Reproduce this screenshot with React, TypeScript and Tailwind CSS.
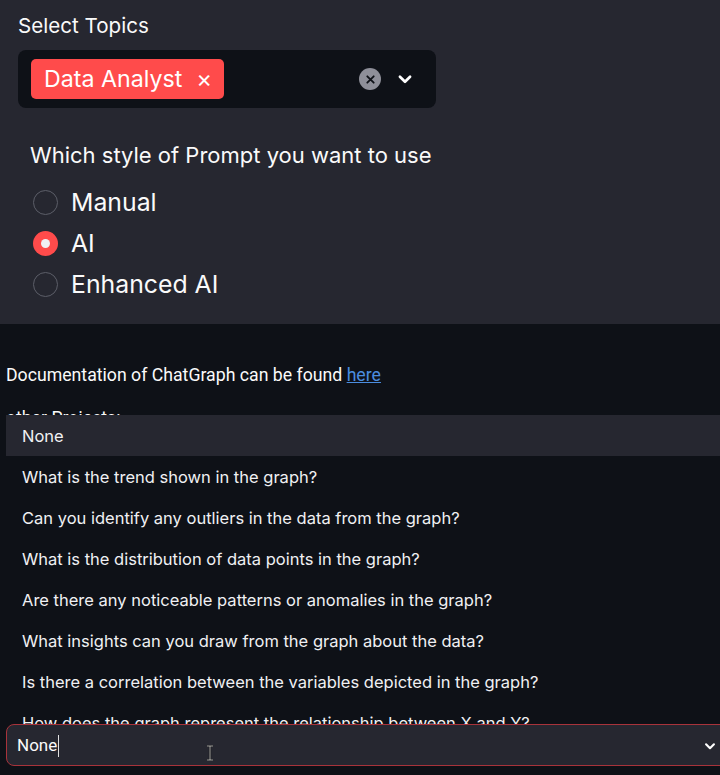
import React from "react";

const items = [
  "None",
  "What is the trend shown in the graph?",
  "Can you identify any outliers in the data from the graph?",
  "What is the distribution of data points in the graph?",
  "Are there any noticeable patterns or anomalies in the graph?",
  "What insights can you draw from the graph about the data?",
  "Is there a correlation between the variables depicted in the graph?",
  "How does the graph represent the relationship between X and Y?",
];

function Chevron({ className = "" }: { className?: string }) {
  return (
    <svg viewBox="0 0 16 16" className={className} fill="none">
      <path d="M3.5 6 L8 10.5 L12.5 6" stroke="currentColor" strokeWidth="2.4" strokeLinecap="round" strokeLinejoin="round" />
    </svg>
  );
}

function Radio({ checked, label }: { checked?: boolean; label: string }) {
  return (
    <div className="flex items-center h-[41px]">
      {checked ? (
        <div className="w-[25px] h-[25px] rounded-full bg-[#ff4b4b] flex items-center justify-center">
          <div className="w-[9px] h-[9px] rounded-full bg-[#f0f0f5]" />
        </div>
      ) : (
        <div className="w-[25px] h-[25px] rounded-full border-[1.5px] border-[#5c5e68]" />
      )}
      <span className="ml-[13px] text-[24.8px] text-[#fafafa]">{label}</span>
    </div>
  );
}

export default function App() {
  return (
    <div
      className="w-[720px] h-[775px] overflow-hidden bg-[#0e1117] text-[#fafafa]"
      style={{ fontFamily: "Inter, 'Noto Sans', sans-serif" }}
    >
      <div className="h-[324px] bg-[#262730] px-[18px] pt-[12px]">
        <div className="text-[20.6px] leading-[28px]">Select Topics</div>
        <div className="mt-[10px] w-[418px] h-[58px] rounded-[8px] bg-[#0e1117] flex items-center pl-[13px] pr-[22px]">
          <div className="h-[40px] rounded-[5px] bg-[#ff4b4b] flex items-center pl-[13px] pr-[12px] text-[23.2px] text-white">
            <span>Data Analyst</span>
            <span className="ml-[14px] text-[24px] leading-none">×</span>
          </div>
          <div className="flex-1" />
          <div className="w-[22px] h-[22px] rounded-full bg-[#8e8f99] flex items-center justify-center">
            <svg viewBox="0 0 12 12" className="w-[11px] h-[11px]">
              <path d="M2.5 2.5 L9.5 9.5 M9.5 2.5 L2.5 9.5" stroke="#0e1117" strokeWidth="2" strokeLinecap="round" />
            </svg>
          </div>
          <Chevron className="ml-[15px] w-[18px] h-[18px] text-white" />
        </div>
        <div className="pl-[12px] mt-[33px]">
          <div className="text-[22px] leading-[28px]">Which style of Prompt you want to use</div>
          <div className="mt-[13px] pl-[3px]">
            <Radio label="Manual" />
            <Radio checked label="AI" />
            <Radio label="Enhanced AI" />
          </div>
        </div>
      </div>

      <div className="relative h-[451px] w-[740px]">
        <div
          className="pl-[6px] pt-[40px] text-[17.7px] leading-[22px]"
          style={{ fontFamily: "Roboto, 'Liberation Sans', sans-serif" }}
        >
          Documentation of ChatGraph can be found{" "}
          <span className="text-[#4b8de0] underline">here</span>
        </div>
        <div
          className="pl-[6px] mt-[21px] text-[17.7px] leading-[22px]"
          style={{ fontFamily: "Roboto, 'Liberation Sans', sans-serif" }}
        >
          other Projects:
        </div>

        <div className="absolute left-[6px] right-0 top-[91px] h-[310px] overflow-hidden bg-[#0e1117]">
          {items.map((t, i) => (
            <div
              key={t}
              className={`h-[41px] flex items-center pl-[16px] pt-[2px] text-[16.5px] text-[#f0f0f3] ${i === 0 ? "bg-[#262730]" : ""}`}
            >
              {t}
            </div>
          ))}
        </div>

        <div className="absolute left-[6px] w-[726px] top-[400px] h-[42px] rounded-[8px] border border-[#a8333b] bg-[#262730] flex items-center pl-[10px] pr-[14px] pt-[2px]">
          <span
            className="text-[17px] text-[#fafafa]"
            style={{ fontFamily: "Roboto, 'Liberation Sans', sans-serif" }}
          >
            None
          </span>
          <span className="w-[1px] h-[22px] bg-[#e0e0e0] ml-[1px]" />
          <div className="flex-1" />
          <Chevron className="w-[14px] h-[14px] text-white" />
        </div>
        <svg className="absolute left-[205px] top-[421px] w-[10px] h-[16px]" viewBox="0 0 10 16">
          <path d="M2 1 H8 M5 1 V15 M2 15 H8" stroke="#111" strokeWidth="2.2" />
          <path d="M2 1 H8 M5 1 V15 M2 15 H8" stroke="#bbb" strokeWidth="0.9" />
        </svg>
      </div>
    </div>
  );
}
